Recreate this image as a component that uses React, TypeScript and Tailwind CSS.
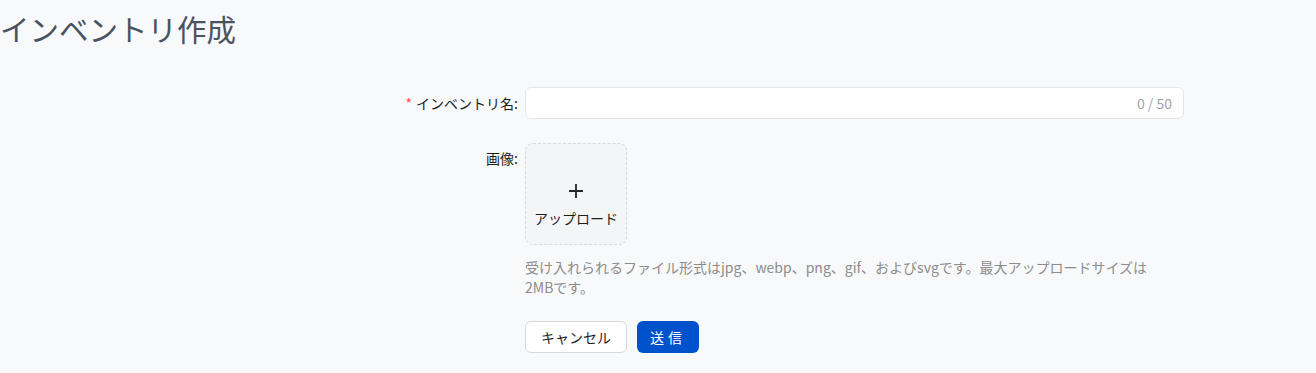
const font = { fontFamily: '"Noto Sans CJK JP", "Noto Sans", sans-serif' }

export default function App() {
  return (
    <div className="min-h-[373px] w-full bg-[#f8f9fb] text-[#1f1f1f]" style={font}>
      <h1 className="pt-[8px] text-[29.5px] leading-[40px] font-normal text-[#4a5261]">インベントリ作成</h1>
      <div className="mt-[39px] flex flex-col">
        <div className="flex items-center">
          <label className="w-[525px] pr-[7px] text-right text-[14px] leading-[32px]">
            <span className="mr-1 text-[#ff4d4f]">*</span>
            インベントリ名:
          </label>
          <div className="flex h-[32px] w-[659px] items-center rounded-md border border-[#e3e5e9] bg-white px-[11px]">
            <input className="h-full flex-1 bg-transparent text-[14px] outline-none" />
            <span className="text-[14px] text-[#a0a4ab]">0 / 50</span>
          </div>
        </div>
        <div className="mt-[24px] flex items-start">
          <label className="w-[525px] pr-[7px] pt-[4px] text-right text-[14px] leading-[22px]">画像:</label>
          <div className="flex w-[659px] flex-col">
            <div className="flex h-[102px] w-[102px] flex-col items-center rounded-lg border border-dashed border-[#d9d9d9] bg-[#f4f5f7] pt-[39px]">
              <svg width="16" height="16" viewBox="0 0 16 16" className="text-[#262626]">
                <path d="M8 1v14M1 8h14" stroke="currentColor" strokeWidth="1.8" fill="none" />
              </svg>
              <span className="mt-[9px] text-[14px] leading-[20px]">アップロード</span>
            </div>
            <p className="mt-[12px] max-w-[645px] text-[14px] leading-[20px] text-[#8c8c8c]">
              受け入れられるファイル形式はjpg、webp、png、gif、およびsvgです。最大アップロードサイズは2MBです。
            </p>
            <div className="mt-[24px] flex gap-[10px]">
              <button className="h-[32px] w-[102px] rounded-md border border-[#d9d9d9] bg-white text-[14px]">キャンセル</button>
              <button className="h-[32px] w-[62px] rounded-md bg-[#0052cc] text-[14px] tracking-[4px] text-white">送信</button>
            </div>
          </div>
        </div>
      </div>
    </div>
  )
}
